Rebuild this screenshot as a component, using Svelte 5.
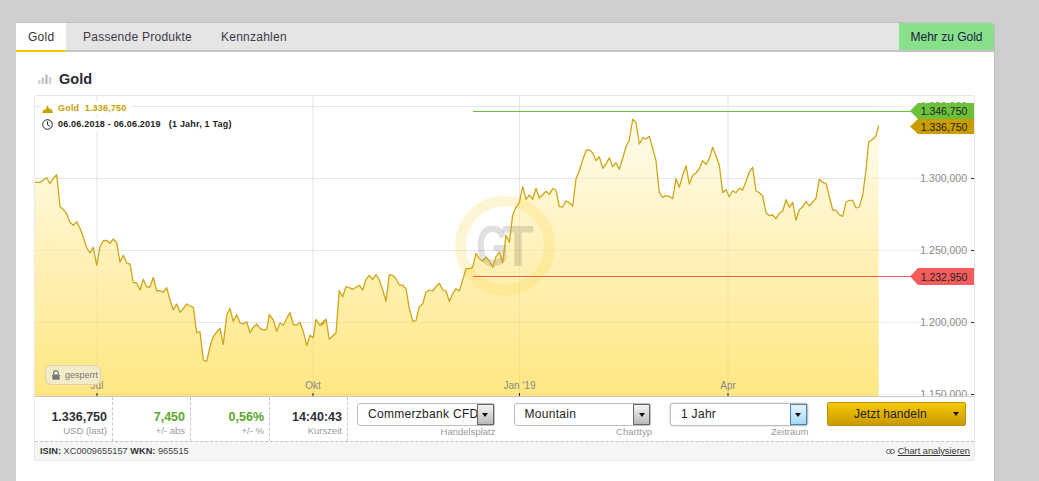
<script>
  const z7 = [[15,37],[30,37],[50,23],[60,41],[70,25],[80,14],[90,110],[100,118],[110,132],[120,157],[130,166],[140,155],[150,175],[160,202],[170,233],[180,249],[190,232],[200,286],[210,230],[220,212],[230,211],[240,220],[250,207],[260,218],[270,276],[280,256],[290,280],[300,282],[310,337],[320,339],[330,360],[340,328],[350,351],[360,351],[370,322],[380,363],[390,362],[400,367],[410,353],[420,390],[430,419],[440,402],[450,427],[460,416],[470,402],[480,408],[490,412],[500,488],[510,485],[520,570],[530,574],[540,530],[550,500],[560,486],[570,475],[580,523],[590,435],[600,415],[610,454],[620,434],[630,458],[640,462],[650,455],[660,488],[670,472],[680,462],[690,475],[700,480],[710,478],[718,434],[730,450],[740,484],[750,459],[760,466],[770,445],[780,428],[790,463],[800,466],[810,457],[820,485],[830,527],[840,496],[850,503],[858,448],[870,466],[880,462],[888,448]];
  const z8 = [[0,645],[10,640],[18,627],[28,688],[48,668],[58,542],[68,560],[78,530],[88,533],[98,538],[108,532],[118,526],[128,540],[138,508],[148,496],[158,508],[168,494],[178,510],[188,540],[198,574],[208,494],[218,496],[228,506],[238,525],[248,526],[258,536],[268,595],[278,633],[288,632],[298,590],[308,582],[318,546],[328,540],[338,543],[348,530],[358,520],[368,540],[378,543],[388,574],[398,552],[408,536],[418,543],[428,510],[438,476],[448,476],[458,472],[468,430],[478,446],[488,453],[498,442],[508,452],[518,472],[528,440],[538,426],[548,458],[558,376],[568,397],[578,314],[588,292],[598,278],[608,230],[618,268],[628,255],[638,268],[648,235],[658,264],[668,254],[678,244],[688,253],[698,236],[708,240],[718,290],[728,291],[738,273],[748,278],[758,288],[768,206],[778,182],[788,150],[798,122],[808,119],[818,128],[828,152],[838,140],[848,175],[858,162],[868,143],[878,170],[888,158]];
  const z9 = [[58,178],[68,145],[78,110],[88,90],[98,28],[108,38],[118,102],[128,83],[138,87],[148,79],[158,115],[168,152],[178,248],[188,262],[198,257],[208,259],[218,266],[228,206],[238,232],[248,196],[258,167],[268,222],[278,196],[288,189],[298,176],[308,152],[318,163],[328,146],[338,112],[348,138],[358,165],[368,248],[378,239],[388,260],[398,242],[408,248],[418,235],[428,240],[438,214],[448,186],[458,172],[468,243],[478,248],[488,258],[498,308],[508,317],[518,315],[528,326],[538,310],[548,303],[558,269],[568,292],[578,277],[588,331],[598,299],[608,290],[618,274],[628,288],[638,276],[648,265],[658,208],[668,217],[678,220],[688,260],[698,300],[708,301],[718,314],[728,319],[738,277],[748,271],[758,271],[768,294],[778,291],[788,255],[798,180],[806,96],[818,88],[828,78],[836,46]];

  const pts = [
    ...z7.map(([x, y]) => [30 + x / 3, 170 + y / 3]),
    ...z8.map(([x, y]) => [320 + x / 3, 110 + y / 3]),
    ...z9.map(([x, y]) => [600 + x / 3, 110 + y / 3])
  ].map(([x, y]) => `${x.toFixed(1)} ${y.toFixed(1)}`);

  const line = 'M' + pts.join('L');
  const area = line + 'L878.7 396L35 396Z';

  const hGrid = [106, 178, 250, 322, 394];
  const vGrid = [
    { x: 97, label: 'Jul' },
    { x: 313, label: 'Okt' },
    { x: 519.5, label: "Jan '19" },
    { x: 728, label: 'Apr' }
  ];
  const axis = [
    { y: 178, label: '1.300,000' },
    { y: 250, label: '1.250,000' },
    { y: 322, label: '1.200,000' },
    { y: 394, label: '1.150,000' },
    { y: 106, label: '1.350,000' }
  ];
  const flags = [
    { y: 103, h: 16, cls: 'green', label: '1.346,750' },
    { y: 119, h: 15, cls: 'gold', label: '1.336,750' },
    { y: 268, h: 17, cls: 'red', label: '1.232,950' }
  ];
  const stats = [
    { value: '1.336,750', label: 'USD (last)', up: false },
    { value: '7,450', label: '+/- abs', up: true },
    { value: '0,56%', label: '+/- %', up: true },
    { value: '14:40:43', label: 'Kurszeit', up: false }
  ];
  const selects = [
    { value: 'Commerzbank CFD', label: 'Handelsplatz', focus: false },
    { value: 'Mountain', label: 'Charttyp', focus: false },
    { value: '1 Jahr', label: 'Zeitraum', focus: true }
  ];
</script>

<div class="page">
  <section class="card">
    <nav class="tabs">
      <span class="tab active">Gold</span>
      <span class="tab">Passende Produkte</span>
      <span class="tab">Kennzahlen</span>
      <span class="more">Mehr zu Gold</span>
    </nav>

    <div class="content">
      <h2 class="title">
        <svg width="14" height="10" viewBox="0 0 14 10" aria-hidden="true">
          <rect x="0" y="6" width="2.4" height="4" fill="#d8d8d8" />
          <rect x="3.6" y="3.5" width="2.4" height="6.5" fill="#c8c8c8" />
          <rect x="7.2" y="0.5" width="2.4" height="9.5" fill="#bdbdbd" />
          <rect x="10.8" y="3" width="2.4" height="7" fill="#d0d0d0" />
        </svg>
        Gold
      </h2>

      <div class="chart">
        <div class="plot">
          <svg class="canvas" width="939" height="301" viewBox="35 95 939 301">
            <defs>
              <linearGradient id="fill" gradientUnits="userSpaceOnUse" x1="0" y1="120" x2="0" y2="396">
                <stop offset="0" stop-color="#fffcee" />
                <stop offset="1" stop-color="#ffe782" />
              </linearGradient>
            </defs>

            {#each hGrid as y}
              <line x1="35" x2="974" y1={y + 0.5} y2={y + 0.5} stroke="#efefef" />
            {/each}
            {#each vGrid as v}
              <line x1={v.x} x2={v.x} y1="95" y2="396" stroke="#efefef" />
            {/each}

            <path d={area} fill="url(#fill)" />
            {#each hGrid as y}
              <line x1="35" x2="878" y1={y + 0.5} y2={y + 0.5} stroke="#000" stroke-opacity="0.04" />
            {/each}
            {#each vGrid as v}
              <line x1={v.x} x2={v.x} y1="95" y2="396" stroke="#000" stroke-opacity="0.04" />
            {/each}

            <circle cx="505" cy="245.5" r="44.5" fill="none" stroke="#fbd44a" stroke-opacity="0.24" stroke-width="11" />
            <text class="mark" x="476" y="266" textLength="33" lengthAdjust="spacingAndGlyphs">G</text>
            <text class="mark" x="502" y="266" textLength="32" lengthAdjust="spacingAndGlyphs">T</text>

            <path d={line} fill="none" stroke="#cfa618" stroke-width="1.3" stroke-linejoin="round" />

            <line x1="473" x2="912" y1="111.5" y2="111.5" stroke="#6cbf3a" />
            <line x1="473" x2="912" y1="276.5" y2="276.5" stroke="#f45b5b" />

            {#each axis as a}
              <text class="axis" x="967" y={a.y + 4} text-anchor="end">{a.label}</text>
              <line x1="971" x2="974" y1={a.y + 0.5} y2={a.y + 0.5} stroke="#222" />
            {/each}

            {#each vGrid as v}
              <text class="tickl" x={v.x} y="389" text-anchor="middle">{v.label}</text>
              <line x1={v.x} x2={v.x} y1="393" y2="396" stroke="#222" />
            {/each}

            {#each flags as f}
              <path class={f.cls} d="M910 {f.y + f.h / 2}L918 {f.y}H974V{f.y + f.h}H918Z" />
              <text class="flagt" x="944" y={f.y + f.h / 2 + 4} text-anchor="middle">{f.label}</text>
            {/each}
          </svg>

          <div class="legend">
            <div class="lrow">
              <svg width="11" height="9" viewBox="0 0 11 9" aria-hidden="true">
                <path d="M0 9L2 5L3.5 6L5.5 1L7.5 5.5L9 4L11 9Z" fill="#c9a100" />
              </svg>
              <span class="gold-txt">Gold&nbsp;&nbsp;1.336,750</span>
            </div>
            <div class="lrow">
              <svg width="11" height="11" viewBox="0 0 11 11" aria-hidden="true">
                <circle cx="5.5" cy="5.5" r="4.8" fill="none" stroke="#222" stroke-width="1" />
                <path d="M5.5 2.5V5.8L7.6 7.4" fill="none" stroke="#222" stroke-width="1" />
              </svg>
              <span class="date-txt">06.06.2018 - 06.06.2019 &nbsp; (1 Jahr, 1 Tag)</span>
            </div>
          </div>

          <div class="locked">
            <svg width="8" height="10" viewBox="0 0 8 10" aria-hidden="true">
              <path d="M1.6 4.5V3a2.4 2.4 0 0 1 4.8 0v1.5" fill="none" stroke="#777" stroke-width="1.2" />
              <rect x="0.3" y="4.4" width="7.4" height="5.4" rx="0.8" fill="#777" />
            </svg>
            gesperrt
          </div>
        </div>

        <div class="info">
          <div class="stats">
            {#each stats as s}
              <div class="stat">
                <b class:up={s.up}>{s.value}</b>
                <small>{s.label}</small>
              </div>
            {/each}
          </div>

          <div class="selects">
            {#each selects as s}
              <div class="field">
                <div class="select" class:focus={s.focus}>
                  <span class="val">{s.value}</span>
                  <span class="arrow"><i></i></span>
                </div>
                <small>{s.label}</small>
              </div>
            {/each}
          </div>

          <button class="trade" type="button">
            <span>Jetzt handeln</span>
            <i></i>
          </button>
        </div>

        <footer class="foot">
          <span class="isin"><b>ISIN:</b> XC0009655157 <b>WKN:</b> 965515</span>
          <span class="analyse">
            <svg width="9" height="5" viewBox="0 0 9 5" aria-hidden="true">
              <rect x="0.5" y="0.5" width="4.5" height="4" rx="2" fill="none" stroke="#666" />
              <rect x="4" y="0.5" width="4.5" height="4" rx="2" fill="none" stroke="#666" />
            </svg>
            <u>Chart analysieren</u>
          </span>
        </footer>
      </div>
    </div>
  </section>
</div>

<style>
  :global(body) {
    margin: 0;
    background: #cfcfcf;
    overflow: hidden;
    font-family: "Liberation Sans", Arial, sans-serif;
  }
  .page {
    padding: 23px 44px 0 16px;
    height: 458px;
    overflow: hidden;
  }
  .card {
    width: 978px;
    height: 480px;
    background: #fff;
    border-right: 1px solid #bdbdbd;
    border-radius: 2px 3px 0 0;
    box-shadow: 0 -1px 0 #c2c2c2;
  }
  .tabs {
    display: flex;
    align-items: stretch;
    height: 27px;
    background: #e5e5e5;
    border-bottom: 2px solid #c4c4c4;
    color: #403a4a;
    font-size: 12px;
    letter-spacing: 0.25px;
  }
  .tab {
    display: flex;
    align-items: center;
    padding: 0 15px 0 17px;
  }
  .tab.active {
    width: 50px;
    box-sizing: border-box;
    padding: 0 12px;
    margin-bottom: -2px;
    background: #fff;
    border-bottom: 2px solid #f7c600;
    color: #333;
  }
  .tab:nth-child(3) {
    padding-left: 14px;
  }
  .more {
    margin-left: auto;
    width: 95px;
    display: flex;
    align-items: center;
    justify-content: center;
    background: #88e08a;
    color: #1c1a40;
    letter-spacing: 0;
    border-top-right-radius: 3px;
  }
  .content {
    padding: 0 19px 0 18px;
  }
  .title {
    display: flex;
    align-items: center;
    gap: 7px;
    margin: 0;
    height: 43px;
    padding-left: 4px;
    padding-top: 11px;
    box-sizing: border-box;
    font-size: 14.5px;
    font-weight: bold;
    color: #2a2a33;
  }
  .chart {
    width: 941px;
    border: 1px solid #e8e8e8;
    box-sizing: border-box;
    border-radius: 2px;
  }
  .plot {
    position: relative;
    height: 300px;
    border-bottom: 1px solid #c8c8c8;
    overflow: hidden;
  }
  .canvas {
    display: block;
    position: absolute;
    left: 0;
    top: -1px;
  }
  .mark {
    font-family: "Liberation Sans", Arial, sans-serif;
    font-weight: bold;
    font-size: 57px;
    fill: #000;
    fill-opacity: 0.12;
  }
  .axis {
    font-size: 10.5px;
    fill: #8a8a8a;
  }
  .tickl {
    font-size: 10px;
    fill: #8a8a8a;
  }
  .flagt {
    font-size: 10.5px;
    fill: #222;
  }
  .green { fill: #6cc13a; }
  .gold { fill: #c99c00; }
  .red { fill: #f55d5d; }
  .legend {
    position: absolute;
    left: 6px;
    top: 6px;
    display: flex;
    flex-direction: column;
    align-items: flex-start;
    gap: 3px;
    font-size: 9px;
    font-weight: bold;
  }
  .lrow {
    display: flex;
    align-items: center;
    gap: 5px;
    height: 14px;
    padding: 0 1px;
    background: #fff;
    letter-spacing: 0.2px;
  }
  .lrow:first-child {
    height: 12px;
    padding-right: 5px;
  }
  .gold-txt { color: #c9a100; }
  .date-txt { color: #222; white-space: pre; }
  .locked {
    position: absolute;
    left: 10px;
    top: 269px;
    width: 56px;
    height: 20px;
    box-sizing: border-box;
    display: flex;
    align-items: center;
    gap: 5px;
    padding-left: 6px;
    background: #f3ecc9;
    border: 1px solid #d9d2ac;
    border-radius: 6px;
    font-size: 9px;
    color: #777;
  }
  .info {
    display: flex;
    align-items: flex-start;
    height: 44px;
  }
  .stats {
    display: grid;
    grid-template-columns: 78px 78px 79px 78px;
    height: 44px;
  }
  .stat {
    display: flex;
    flex-direction: column;
    align-items: flex-end;
    padding: 13px 5px 0 0;
    border-right: 1px dashed #c8c8c8;
    box-sizing: border-box;
  }
  .stat b {
    font-size: 12.5px;
    line-height: 14px;
    color: #2f2f38;
  }
  .stat b.up { color: #5ba52a; }
  .stat small, .field small {
    font-size: 9.5px;
    line-height: 12px;
    color: #999;
  }
  .stat small { margin-top: 1px; }
  .selects {
    display: flex;
    gap: 19px;
    margin-left: 9px;
    padding-top: 6px;
  }
  .field {
    width: 137.5px;
    display: flex;
    flex-direction: column;
    align-items: flex-end;
  }
  .field small { margin-right: -1px; }
  .select {
    width: 100%;
    height: 23px;
    box-sizing: border-box;
    display: flex;
    align-items: stretch;
    background: #fff;
    border: 1px solid #bdbdbd;
    border-radius: 3px;
    font-size: 12px;
    color: #222;
  }
  .select.focus { box-shadow: 0 0 2px #bbb; }
  .val {
    flex: 1;
    overflow: hidden;
    white-space: nowrap;
    padding: 3px 0 0 10px;
    letter-spacing: 0.3px;
  }
  .arrow {
    width: 17px;
    box-sizing: border-box;
    display: flex;
    align-items: center;
    justify-content: center;
    border: 1px solid #666;
    background: linear-gradient(#f4f4f4, #b9b9b9);
  }
  .focus .arrow {
    border-color: #4a84b0;
    background: linear-gradient(#e8f4fd, #a6d7f6);
  }
  .arrow i, .trade i {
    width: 0;
    height: 0;
    border-left: 3.5px solid transparent;
    border-right: 3.5px solid transparent;
    border-top: 4px solid #111;
  }
  .trade {
    position: relative;
    width: 139px;
    height: 24px;
    margin: 5px 0 0 19.5px;
    padding: 0;
    display: flex;
    align-items: center;
    box-sizing: border-box;
    background: linear-gradient(#f7c800, #c89a00);
    border: 1px solid #b8930a;
    border-radius: 2px;
    font: 12px "Liberation Sans", Arial, sans-serif;
    color: #222;
    letter-spacing: 0.1px;
  }
  .trade span { margin-left: 26px; }
  .trade i { margin-left: auto; margin-right: 6px; }
  .foot {
    display: flex;
    align-items: center;
    justify-content: space-between;
    height: 18px;
    padding: 0 4px 0 5px;
    background: #f5f5f5;
    border-top: 1px dashed #c4c4c4;
    font-size: 9.2px;
    letter-spacing: 0.02px;
    color: #444;
  }
  .isin b { color: #333; }
  .analyse {
    display: flex;
    align-items: center;
    gap: 3px;
    color: #333;
  }
</style>
